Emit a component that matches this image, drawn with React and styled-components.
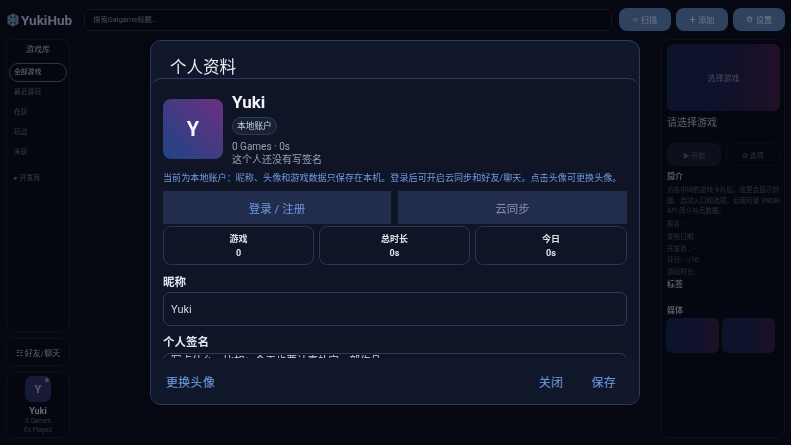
import React from "react";
import styled, { createGlobalStyle, css } from "styled-components";

const Global = createGlobalStyle`
  html, body { margin: 0; padding: 0; height: 100%; background: #04060f; overflow: hidden; }
  #root { height: 100%; }
  * { box-sizing: border-box; }
  body { font-family: Roboto, "Noto Sans CJK SC", sans-serif; }
`;

const Stage = styled.div`
  position: relative; width: 791px; height: 445px; overflow: hidden; background: #04060f;
`;
const Shell = styled.div`
  width: 100%; height: 100%; padding: 8px 6px 7px; display: flex; flex-direction: column; gap: 8px;
  filter: blur(0.5px); opacity: 0.5; background: #060914;
`;
const TopBar = styled.header`display: flex; align-items: center; height: 23px;`;
const Logo = styled.div`
  width: 78px; display: flex; align-items: center; gap: 1px; font-size: 13.5px; font-weight: 700; color: #b9c6dc;
`;
const Search = styled.div`
  width: 528px; height: 22px; border: 1px solid #1c2434; border-radius: 7px; background: #04060c;
  color: #8a93a2; font-size: 7.4px; line-height: 20px; padding-left: 8px;
`;
const TopButtons = styled.div`display: flex; gap: 5px; margin-left: 7px;`;
const TopButton = styled.div`
  width: 52px; height: 23px; border-radius: 8px; background: #5a80b0; color: #dfe7f3; font-size: 8px;
  display: flex; align-items: center; justify-content: center; gap: 3px;
`;
const TopIcon = styled.span`font-size: ${p => p.$size || 6}px; line-height: 1;`;
const Main = styled.div`flex: 1; min-height: 0; display: flex; justify-content: space-between;`;
const LeftColumn = styled.div`width: 64px; display: flex; flex-direction: column; gap: 6px;`;
const Panel = styled.section`border: 1px solid #161d2c; border-radius: 8px; background: #060812;`;
const Library = styled(Panel)`flex: 1; padding: 3px 2px; display: flex; flex-direction: column;`;
const LibraryTitle = styled.div`font-size: 8px; color: #b4bcc8; text-align: center; height: 12px; margin-bottom: 8px;`;
const NavItem = styled.div`
  height: 19px; line-height: 17px; padding-left: 4px; font-size: 6.8px; border-radius: 9px; border: 1px solid transparent;
  margin-bottom: 1px; color: #6a7280;
  ${p => p.$active && css`border-color: #5a6475; color: #d4dae3;`}
`;
const Developers = styled.div`font-size: 6.8px; color: #6f7785; margin-top: 9px; padding-left: 5px;`;
const Friends = styled(Panel)`
  height: 28px; display: flex; align-items: center; justify-content: center; font-size: 8px; color: #b4bcc8;
`;
const UserCard = styled(Panel)`
  height: 66px; display: flex; flex-direction: column; align-items: center; padding-top: 3px;
`;
const MiniAvatar = styled.div`
  position: relative; width: 26px; height: 26px; border-radius: 7px; background: linear-gradient(45deg, #1e2f5e, #3c2c60);
  color: #a8b0c2; font-size: 11px; font-weight: 700; display: flex; align-items: center; justify-content: center;
`;
const Dot = styled.span`
  position: absolute; top: 2px; right: 2px; width: 4px; height: 4px; border-radius: 50%; background: #8a93a5;
`;
const UserName = styled.div`font-size: 9px; font-weight: 700; color: #c4cad4; margin-top: 3px; line-height: 12px;`;
const UserMeta = styled.div`font-size: 6.5px; color: #5c6473; line-height: 7.5px; text-align: center; margin-top: 1px;`;
const Details = styled(Panel)`width: 124px; padding: 4px 4px 4px 5px; display: flex; flex-direction: column;`;
const Cover = styled.div`
  height: 67px; border-radius: 6px; background: linear-gradient(90deg, #14224a, #1d1d45 60%, #3f1a3f);
  display: flex; align-items: center; justify-content: center; font-size: 8px; color: #8a8da3;
`;
const GameTitle = styled.div`font-size: 10px; color: #b4bac5; margin-top: 5px; line-height: 14px;`;
const Actions = styled.div`display: flex; gap: 5px; margin-top: 13px;`;
const Action = styled.div`
  flex: 1; height: 23px; border-radius: 7px; font-size: 7px; display: flex; align-items: center; justify-content: center;
  color: #565c69; background: ${p => (p.$filled ? "#141a27" : "transparent")};
  border: 1px solid ${p => (p.$filled ? "#141a27" : "#10151f")};
`;
const SideHeading = styled.div`font-size: 8px; font-weight: 700; color: #a4acb9; margin-top: ${p => p.$top || 5}px; line-height: 11px;`;
const SideText = styled.div`font-size: 6.6px; line-height: 10.5px; color: #565d6b; margin: 3px -3px 0 0;`;
const SideRow = styled.div`font-size: 6.6px; color: #545b68; line-height: 11.5px; margin-top: ${p => p.$top || 0}px;`;
const Media = styled.div`display: flex; gap: 3px; margin-top: 2px; margin-left: -1px;`;
const Thumb = styled.div`
  width: 53px; height: 35px; border-radius: 6px; background: linear-gradient(90deg, #14224a, #1d1d45 60%, #3a1a3c);
`;

const Modal = styled.div`
  position: absolute; left: 150px; top: 40px; width: 490px; height: 365px; display: flex; flex-direction: column;
  background: #10172a; border: 1px solid #2b3b5e; border-radius: 11px; overflow: hidden; color: #e6eaf2;
  filter: blur(0.25px);
`;
const ModalTitle = styled.h2`
  margin: 0; height: 37px; padding: 17px 0 0 19px; font-size: 16.5px; font-weight: 400; line-height: 20px; color: #e8ebf2;
`;
const ModalBody = styled.div`
  flex: 1; min-height: 0; overflow: hidden; padding: 0 12px; background: #0f1526;
  border-top: 1px solid #2b3b5e; border-radius: 11px 11px 0 0;
`;
const Identity = styled.div`display: flex; gap: 9px; padding-top: 20px;`;
const BigAvatar = styled.div`
  width: 60px; height: 60px; border-radius: 8px; background: linear-gradient(45deg, #1e4585, #6b2f80);
  display: flex; align-items: center; justify-content: center; font-size: 20px; font-weight: 700; color: #f3f5fa;
`;
const IdentityText = styled.div`display: flex; flex-direction: column; align-items: flex-start;`;
const Name = styled.div`font-size: 17px; font-weight: 700; line-height: 14px; color: #f0f2f7; margin-top: -4px;`;
const Chip = styled.div`
  margin-top: 8px; height: 18px; padding: 0 4px; border-radius: 9px; border: 1px solid #2d3d55; background: #182233;
  font-size: 8.7px; line-height: 16px; color: #c6d0e0;
`;
const Meta = styled.div`font-size: 10px; line-height: 13px; color: #99a2b2; margin-top: ${p => p.$top || 0}px;`;
const Notice = styled.div`font-size: 9.1px; line-height: 13px; color: #6f9be0; margin-top: 6px; white-space: nowrap;`;
const AuthRow = styled.div`display: grid; grid-template-columns: 228px 229px; gap: 7px; margin-top: 6px;`;
const AuthButton = styled.div`
  height: 33px; background: #222c4d; display: flex; align-items: center; justify-content: center; font-size: 11.5px;
  color: ${p => (p.$muted ? "#8991a8" : "#6f9be0")};
`;
const Stats = styled.div`display: grid; grid-template-columns: 151px 151px 152px; gap: 5px; margin-top: 2px;`;
const Stat = styled.div`
  height: 39px; border: 1px solid #2b364e; border-radius: 8px; display: flex; flex-direction: column; align-items: center;
  justify-content: center; font-size: 9px; font-weight: 700; line-height: 14px; color: #dfe4ec;
`;
const Label = styled.div`font-size: 11.5px; font-weight: 700; line-height: 14px; color: #e3e7ee; margin-top: ${p => p.$top}px;`;
const Field = styled.div`
  margin-top: ${p => (p.$area ? 4 : 3)}px; height: 34px; border: 1px solid #2f3b55; border-radius: 7px; padding: 1px 7px 0; line-height: 32px;
  font-size: 11px; color: #cfd5df;
  ${p => p.$area && css`height: 50px; line-height: 10px; padding-top: 2px; font-size: 10.5px;`}
`;
const Footer = styled.footer`
  height: 46px; display: flex; align-items: center; justify-content: space-between; padding: 0 23px 0 15px;
  background: #10172a; font-size: 12px; color: #6f9be0;
`;
const FooterActions = styled.div`display: flex; gap: 28px;`;
const FooterButton = styled.span`letter-spacing: 0.3px;`;

function Snow() {
  return (
    <svg width="14" height="14" viewBox="0 0 24 24" fill="none" stroke="#6e97b8" strokeWidth="3" strokeLinecap="round">
      <path d="M12 2v20M3.3 7l17.4 10M20.7 7L3.3 17M9 3.5L12 6.5l3-3M9 20.5l3-3 3 3M3.5 11l3.5-2-1-4M20.5 11l-3.5-2 1-4M3.5 13l3.5 2-1 4M20.5 13l-3.5 2 1 4" />
    </svg>
  );
}

export default function App() {
  return (
    <Stage>
      <Global />
      <Shell>
        <TopBar>
          <Logo><Snow />YukiHub</Logo>
          <Search>搜索Galgame标题...</Search>
          <TopButtons>
            <TopButton><TopIcon>⟳</TopIcon>扫描</TopButton>
            <TopButton><TopIcon $size={10}>+</TopIcon>添加</TopButton>
            <TopButton><TopIcon $size={8}>⚙</TopIcon>设置</TopButton>
          </TopButtons>
        </TopBar>
        <Main>
          <LeftColumn>
            <Library>
              <LibraryTitle>游戏库</LibraryTitle>
              <NavItem $active>全部游戏</NavItem>
              <NavItem>最近游玩</NavItem>
              <NavItem>在玩</NavItem>
              <NavItem>玩过</NavItem>
              <NavItem>未玩</NavItem>
              <Developers>▸ 开发商</Developers>
            </Library>
            <Friends>☷ 好友/聊天</Friends>
            <UserCard>
              <MiniAvatar>Y<Dot /></MiniAvatar>
              <UserName>Yuki</UserName>
              <UserMeta>0 Games</UserMeta>
              <UserMeta>0s Played</UserMeta>
            </UserCard>
          </LeftColumn>
          <Details>
            <Cover>选择游戏</Cover>
            <GameTitle>请选择游戏</GameTitle>
            <Actions>
              <Action $filled>▶ 开始</Action>
              <Action>⚙ 选项</Action>
            </Actions>
            <SideHeading>简介</SideHeading>
            <SideText>点击中间的游戏卡片后，这里会显示封面、启动入口和选项。后续可接 VNDB/<wbr />API 简介与元数据。</SideText>
            <SideRow $top={2}>原名：-</SideRow>
            <SideRow $top={2}>发布日期：-</SideRow>
            <SideRow>开发商：-</SideRow>
            <SideRow>评分：-/10</SideRow>
            <SideRow>游玩时长：-</SideRow>
            <SideHeading $top={1}>标签</SideHeading>
            <SideHeading $top={15}>媒体</SideHeading>
            <Media><Thumb /><Thumb /></Media>
          </Details>
        </Main>
      </Shell>
      <Modal>
        <ModalTitle>个人资料</ModalTitle>
        <ModalBody>
          <Identity>
            <BigAvatar>Y</BigAvatar>
            <IdentityText>
              <Name>Yuki</Name>
              <Chip>本地账户</Chip>
              <Meta $top={5}>0 Games · 0s</Meta>
              <Meta>这个人还没有写签名</Meta>
            </IdentityText>
          </Identity>
          <Notice>当前为本地账户：昵称、头像和游戏数据只保存在本机。登录后可开启云同步和好友/聊天。点击头像可更换头像。</Notice>
          <AuthRow>
            <AuthButton>登录 / 注册</AuthButton>
            <AuthButton $muted>云同步</AuthButton>
          </AuthRow>
          <Stats>
            <Stat><span>游戏</span><span>0</span></Stat>
            <Stat><span>总时长</span><span>0s</span></Stat>
            <Stat><span>今日</span><span>0s</span></Stat>
          </Stats>
          <Label $top={10}>昵称</Label>
          <Field>Yuki</Field>
          <Label $top={9}>个人签名</Label>
          <Field $area>写点什么，比如：今天也要认真补完一部作品</Field>
        </ModalBody>
        <Footer>
          <FooterButton>更换头像</FooterButton>
          <FooterActions>
            <FooterButton>关闭</FooterButton>
            <FooterButton>保存</FooterButton>
          </FooterActions>
        </Footer>
      </Modal>
    </Stage>
  );
}
